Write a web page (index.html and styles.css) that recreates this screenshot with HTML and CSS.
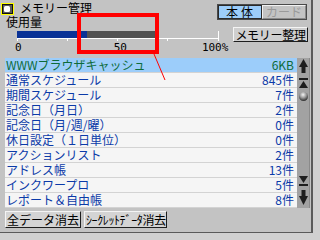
FILE: index.html
```html
<!DOCTYPE html>
<html lang="ja">
<head>
    <meta charset="UTF-8">
    <title>メモリー管理</title>
    <link rel="stylesheet" href="styles.css">
</head>
<body>
    <div class="window">
        <div class="top">
            <div class="usage">
                <div class="title">
                    <svg class="app-icon" width="13" height="12" viewBox="0 0 13 12">
                        <rect x="0" y="0" width="13" height="12" fill="#ffff00"/>
                        <rect x="1.5" y="1.5" width="10" height="9" fill="#5a5a5a" stroke="#111111" stroke-width="1"/>
                        <rect x="3" y="3" width="6" height="6" rx="1.5" fill="#ffffff"/>
                    </svg>
                    メモリー管理
                </div>
                <div class="label">使用量</div>
                <svg class="meter" width="222" height="12" viewBox="0 0 222 12">
                    <rect x="17" y="2" width="70" height="7" fill="#0a3296"/>
                    <rect x="87" y="2" width="68" height="7" fill="#525252"/>
                    <rect x="17" y="9" width="202" height="1" fill="#ffffff"/>
                    <rect x="17" y="9" width="1" height="4" fill="#ffffff"/>
                    <rect x="67" y="9" width="1" height="3" fill="#ffffff"/>
                    <rect x="117" y="9" width="1" height="4" fill="#ffffff"/>
                    <rect x="167" y="9" width="1" height="3" fill="#ffffff"/>
                    <rect x="218" y="2" width="1" height="11" fill="#ffffff"/>
                </svg>
                <div class="scale">
                    <span class="mark-0">0</span>
                    <span class="mark-50">50</span>
                    <span class="mark-100">100%</span>
                </div>
            </div>
            <div class="side">
                <div class="tabs">
                    <span class="tab on">本体</span>
                    <span class="tab off">カード</span>
                </div>
                <button class="tidy">メモリー整理</button>
            </div>
        </div>

        <div class="main">
            <ul class="entries">
                <li class="entry selected"><span>WWWブラウザキャッシュ</span><span>6KB</span></li>
                <li class="entry"><span>通常スケジュール</span><span>845件</span></li>
                <li class="entry"><span>期間スケジュール</span><span>7件</span></li>
                <li class="entry"><span>記念日（月日）</span><span>2件</span></li>
                <li class="entry"><span>記念日（月/週/曜）</span><span>0件</span></li>
                <li class="entry"><span>休日設定（１日単位）</span><span>0件</span></li>
                <li class="entry"><span>アクションリスト</span><span>2件</span></li>
                <li class="entry"><span>アドレス帳</span><span>13件</span></li>
                <li class="entry"><span>インクワープロ</span><span>5件</span></li>
                <li class="entry"><span>レポート＆自由帳</span><span>8件</span></li>
            </ul>
            <svg class="scrollbar" width="13" height="150" viewBox="0 0 13 150">
                <rect x="0" y="0" width="13" height="150" fill="#a2a2a2"/>
                <rect x="12" y="0" width="1" height="150" fill="#8a8a8a"/>
                <!-- up -->
                <polygon points="6.5,1 2,9 11,9" fill="#1e1e1e"/>
                <rect x="4.5" y="9" width="4" height="6" fill="#1e1e1e"/>
                <!-- top -->
                <rect x="2" y="20" width="9" height="2" fill="#1e1e1e"/>
                <polygon points="6.5,23 2,30 11,30" fill="#1e1e1e"/>
                <!-- thumb -->
                <defs>
                    <radialGradient id="knob" cx="0.45" cy="0.3" r="0.7">
                        <stop offset="0" stop-color="#f4f4f4"/>
                        <stop offset="0.5" stop-color="#9a9a9a"/>
                        <stop offset="1" stop-color="#2a2a2a"/>
                    </radialGradient>
                </defs>
                <circle cx="6.5" cy="38.5" r="4.5" fill="url(#knob)"/>
                <!-- bottom -->
                <polygon points="2,118 11,118 6.5,125" fill="#1e1e1e"/>
                <rect x="2" y="126" width="9" height="2" fill="#1e1e1e"/>
                <!-- down -->
                <rect x="4.5" y="132" width="4" height="6" fill="#1e1e1e"/>
                <polygon points="2,138 11,138 6.5,147" fill="#1e1e1e"/>
            </svg>
        </div>

        <div class="actions">
            <button class="action">全データ消去</button>
            <button class="action narrow">ｼｰｸﾚｯﾄﾃﾞｰﾀ消去</button>
        </div>

        <div class="callout"></div>
        <svg class="callout-line" width="14" height="28" viewBox="0 0 14 28">
            <line x1="1" y1="0" x2="12" y2="26" stroke="#ff0000" stroke-width="1"/>
        </svg>
    </div>
</body>
</html>
```

FILE: styles.css
```css
body {
    margin: 0;
    background-color: #d0d0d0;
    font-family: 'Noto Sans CJK JP', sans-serif;
    font-size: 12px;
    color: #000;
}

.window {
    position: relative;
    width: 311px;
    height: 232px;
    background-color: #c3c3c3;
    border-right: 2px solid #5a5a5a;
    border-bottom: 1px solid #5a5a5a;
}

.top {
    display: flex;
    height: 58px;
}

.usage {
    width: 217px;
    flex-shrink: 0;
}

.title {
    display: flex;
    align-items: center;
    height: 15px;
    line-height: 15px;
}

.app-icon {
    margin: 2px 6px 0 1px;
}

.label {
    height: 14px;
    line-height: 14px;
    padding-left: 6px;
}

.meter {
    display: block;
}

.scale {
    display: flex;
    height: 13px;
    line-height: 13px;
    font-family: 'DejaVu Sans Mono', monospace;
    font-size: 11px;
}

.mark-0 {
    margin-left: 15px;
}

.mark-50 {
    margin-left: 92px;
}

.mark-100 {
    margin-left: 75px;
}

.side {
    display: flex;
    flex-direction: column;
}

.tabs {
    display: flex;
    margin-top: 4px;
    width: 88px;
    height: 14px;
    border: 1px solid #4a4a4a;
}

.tab {
    width: 44px;
    box-sizing: border-box;
    height: 14px;
    line-height: 12px;
    text-align: center;
}

.tab.on {
    background-color: #9ccdfa;
    border: 1px solid #2a2a2a;
    letter-spacing: 3px;
    padding-left: 2px;
}

.tab.off {
    color: #9a9a9a;
    border: 1px solid;
    border-color: #f2f2f2 #8a8a8a #8a8a8a #f2f2f2;
}

.tidy {
    margin: 7px 0 0 16px;
    width: 75px;
    height: 15px;
    padding: 0;
    font-family: inherit;
    font-size: 12px;
    line-height: 12px;
    letter-spacing: -0.3px;
    background-color: #cfcfcf;
    border: 1px solid;
    border-color: #f4f4f4 #1e1e1e #1e1e1e #f4f4f4;
    color: #000;
}

.main {
    display: flex;
    margin-left: 5px;
    height: 150px;
}

.entries {
    list-style: none;
    margin: 0;
    padding: 0;
    width: 292px;
    background-color: #f5f5f5;
}

.entry {
    display: flex;
    justify-content: space-between;
    height: 14px;
    line-height: 14px;
    padding: 0 3px 0 1px;
    border-bottom: 1px solid #d3d3d3;
    color: #0b3aa8;
    white-space: nowrap;
}

.entry.selected {
    background-color: #9ccdfa;
    color: #0d6b3a;
}

.scrollbar {
    display: block;
}

.actions {
    display: flex;
    gap: 3px;
    margin: 3px 0 0 5px;
}

.action {
    height: 17px;
    padding: 0 1px;
    font-family: inherit;
    font-size: 12px;
    line-height: 14px;
    background-color: #d4d4d4;
    border: 1px solid;
    border-color: #f4f4f4 #1e1e1e #1e1e1e #f4f4f4;
    color: #000;
    width: 76px;
    white-space: nowrap;
    overflow: hidden;
}

.action.narrow {
    width: 83px;
    letter-spacing: -0.4px;
    text-align: left;
}

.callout {
    position: absolute;
    left: 77px;
    top: 13px;
    width: 74px;
    height: 33px;
    border: 4px solid #ff0000;
}

.callout-line {
    position: absolute;
    left: 153px;
    top: 54px;
}
```
